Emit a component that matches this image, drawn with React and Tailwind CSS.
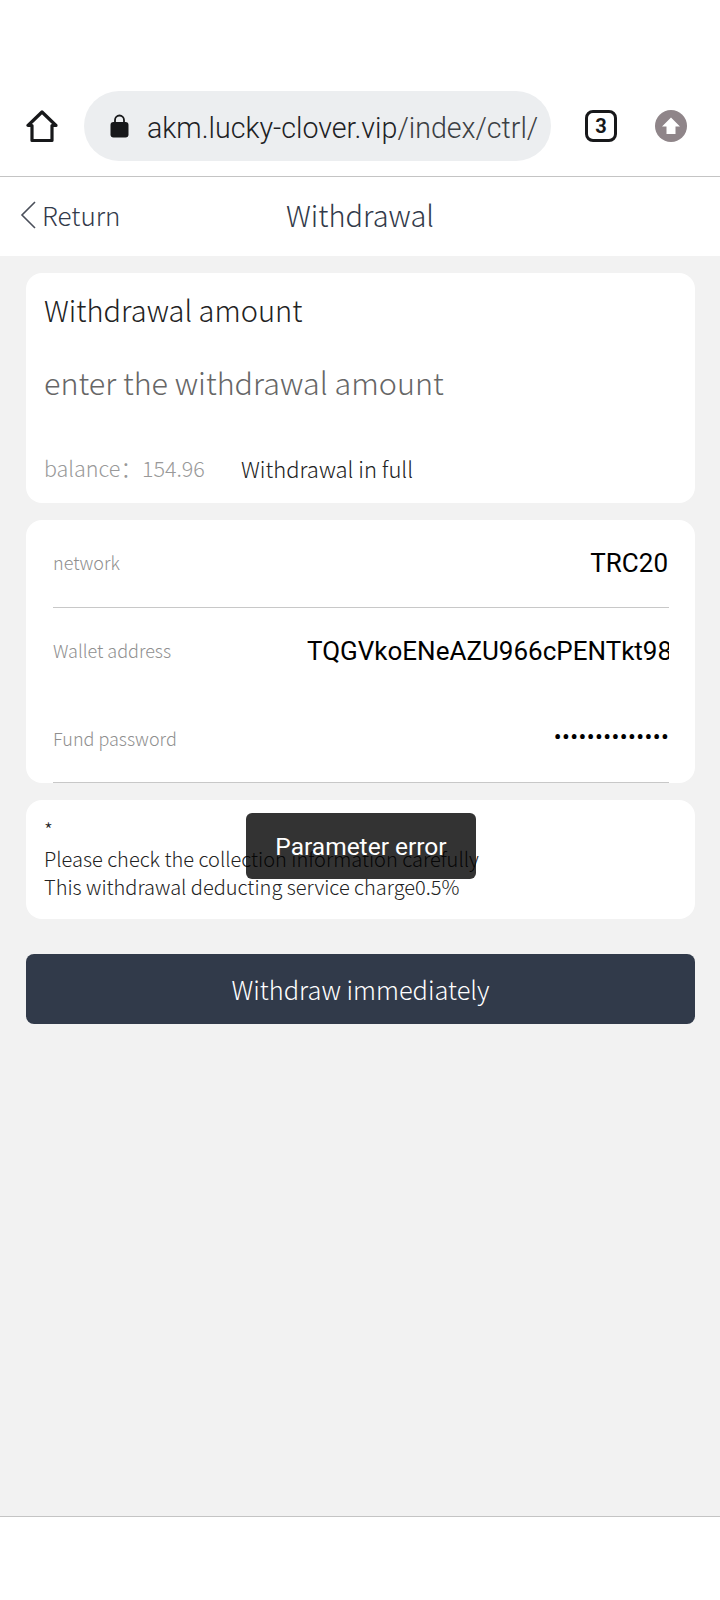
function HomeIcon() {
  return (
    <svg width="32" height="33" viewBox="0 0 32 33" fill="none" stroke="#17181a" strokeWidth="3.2" strokeLinejoin="round" strokeLinecap="round">
      <path d="M16 2 L2 15.5 H6 V30.5 H26 V15.5 H30 Z" />
    </svg>
  );
}

function LockIcon() {
  return (
    <svg width="19" height="24" viewBox="0 0 19 24">
      <path d="M5 9 V6 a4.5 4.5 0 0 1 9 0 V9" fill="none" stroke="#17181a" strokeWidth="1.8" />
      <rect x="0.5" y="8" width="18" height="15.5" rx="3" fill="#17181a" />
    </svg>
  );
}

function UploadIcon() {
  return (
    <svg width="32" height="32" viewBox="0 0 32 32">
      <circle cx="16" cy="16" r="16" fill="#8f8589" />
      <path d="M16 7.5 L25 16.5 H20.5 V24 H11.5 V16.5 H7 Z" fill="#fff" />
    </svg>
  );
}

function BrowserBar() {
  return (
    <div className="h-[177px] bg-white border-b border-[#c4c4c4] pt-[91px] pl-[26px] flex items-start">
      <div className="mt-[19px] w-[34px] h-[34px]">
        <HomeIcon />
      </div>
      <div className="ml-6 w-[467px] h-[70px] rounded-[35px] bg-[#eceef0] flex items-center pl-[26px] overflow-hidden">
        <LockIcon />
        <div className="ml-[18px] mt-1 w-[392px] overflow-hidden whitespace-nowrap font-['Roboto',sans-serif] text-[28.6px] text-[#202124]">
          akm.lucky-clover.vip<span className="text-[#3c4043]">/index/ctrl/</span>
        </div>
      </div>
      <div className="ml-[34px] mt-[19px] w-8 h-8 rounded-[8px] border-[3.5px] border-[#17181a] flex items-center justify-center font-['Roboto',sans-serif] font-bold text-[20px] text-[#17181a]">
        3
      </div>
      <div className="ml-[38px] mt-[19px]">
        <UploadIcon />
      </div>
    </div>
  );
}

function PageHeader() {
  return (
    <div className="h-[79px] bg-white relative flex items-center justify-center">
      <div className="absolute left-[20px] top-[23px] flex items-center">
        <svg width="17" height="30" viewBox="0 0 17 30" fill="none" stroke="#4a4f5a" strokeWidth="1.6">
          <path d="M15 2 L2 15 L15 28" />
        </svg>
        <span className="ml-[5px] text-[26px] leading-[30px] text-[#323a4a]">Return</span>
      </div>
      <span className="-mt-[4px] text-[29px] text-[#323a4a]">Withdrawal</span>
    </div>
  );
}

function FormRow({ label, children, border, short }) {
  return (
    <div className={`flex justify-between ${short ? 'h-[87px]' : 'h-[88px]'} ${border ? 'border-b border-[#c8c8c8]' : ''}`}>
      <span className="mt-[29px] text-[18px] leading-[26px] text-[#8f8f8f]">{label}</span>
      {children}
    </div>
  );
}

export default function App() {
  return (
    <div className="h-[1600px] flex flex-col relative bg-[#f2f2f2] font-['Noto_Sans_CJK_SC','Noto_Sans',sans-serif] font-light">
      <BrowserBar />
      <PageHeader />

      <div className="flex-1 pl-[26px] pr-[25px] pt-[17px]">
        <div className="h-[230px] bg-white rounded-[16px] pl-[18px] overflow-hidden">
          <div className="pt-[16px] text-[29px] leading-[40px] text-[#222222]">Withdrawal amount</div>
          <input
            readOnly
            placeholder="enter the withdrawal amount"
            className="block mt-[34px] w-[600px] h-[40px] text-[30.5px] font-light outline-none placeholder:text-[#666666]"
          />
          <div className="mt-[49px] flex items-center text-[22px] leading-[32px]">
            <span className="w-[197px] text-[21.5px] text-[#999999]">balance：154.96</span>
            <span className="text-[#222222]">Withdrawal in full</span>
          </div>
        </div>

        <div className="mt-[17px] h-[263px] bg-white rounded-[16px] pl-[27px] pr-[26px] overflow-hidden">
          <FormRow label="network" border>
            <div className="mt-[23px] h-[40px] pr-[1px] font-['Roboto',sans-serif] font-normal text-[26px] leading-[40px] text-black">TRC20</div>
          </FormRow>
          <FormRow label="Wallet address">
            <div className="mt-[23px] w-[362px] h-[40px] overflow-hidden whitespace-nowrap font-['Roboto',sans-serif] font-normal text-[26px] leading-[40px] text-black">
              TQGVkoENeAZU966cPENTkt98xYzLm
            </div>
          </FormRow>
          <FormRow label="Fund password" border short>
            <input
              readOnly
              type="password"
              value="aaaaaaaaaaaaaa"
              className="mt-[21px] w-[300px] h-[40px] text-right font-['Roboto',sans-serif] text-[25.5px] text-black outline-none"
            />
          </FormRow>
        </div>

        <div className="mt-[17px] h-[119px] bg-white rounded-[16px] pl-[18px] pt-[16px] text-[20px] leading-[28.5px] text-[#222222]">
          <div>*</div>
          <div>Please check the collection information carefully</div>
          <div>This withdrawal deducting service charge0.5%</div>
        </div>

        <button className="mt-[35px] w-full h-[70px] rounded-[8px] bg-[#313a4a] text-white text-[25.4px] font-light">
          Withdraw immediately
        </button>
      </div>

      <div className="h-[84px] bg-white border-t border-[#c4c4c4]" />

      <div className="absolute left-[246px] top-[813px] w-[230px] h-[66px] pt-[2px] rounded-[6px] bg-black/80 flex items-center justify-center font-['Roboto',sans-serif] font-normal text-[24.5px] text-white">
        Parameter error
      </div>
    </div>
  );
}
